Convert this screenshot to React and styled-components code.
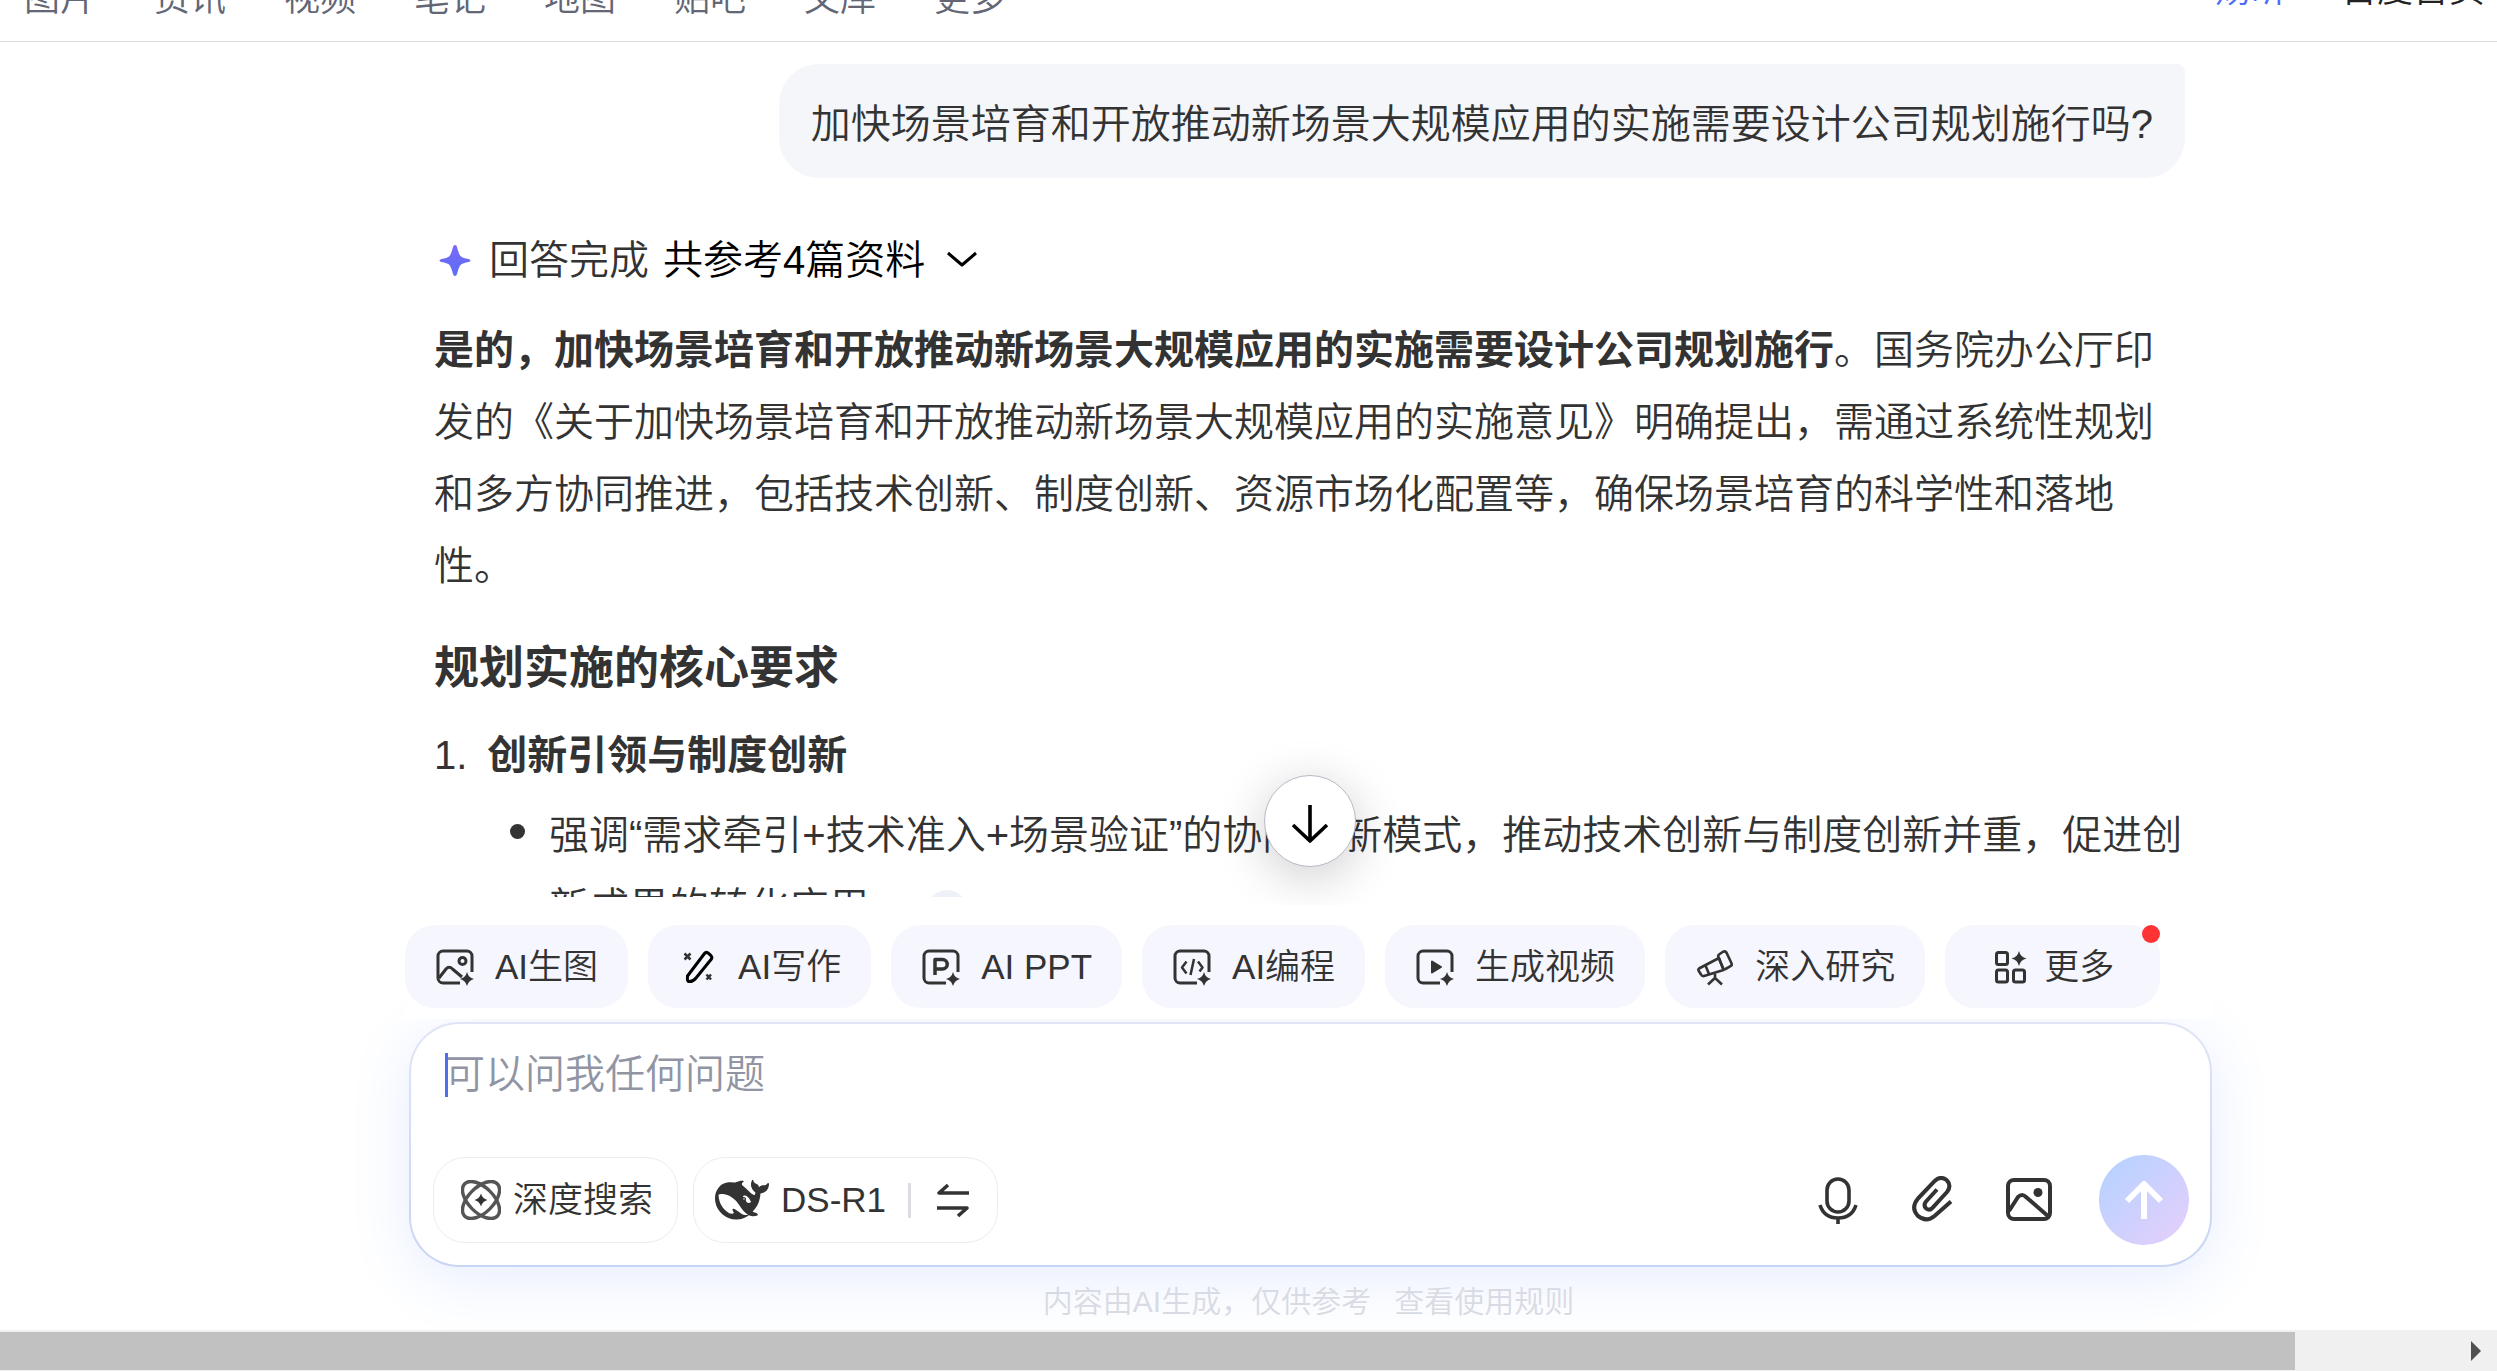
import React from 'react';
import styled, { createGlobalStyle } from 'styled-components';

const GlobalStyle = createGlobalStyle`
  * {
    box-sizing: border-box;
  }

  body {
    margin: 0;
    background: #fff;
    color: #333;
    font-family: "Liberation Sans", "Noto Sans CJK SC", sans-serif;
    font-size: 40px;
    font-weight: 350;
    line-height: 72px;
  }

  button, textarea {
    font: inherit;
    color: inherit;
  }

  button {
    padding: 0;
    border: none;
    background: none;
    cursor: pointer;
  }

  a {
    color: inherit;
    text-decoration: none;
  }

  strong {
    font-weight: 700;
  }

  svg {
    display: block;
    flex: none;
  }
`;

const Page = styled.div`
  display: flex;
  flex-direction: column;
  height: 100vh;
  overflow: hidden;
`;

const Header = styled.header`
  display: flex;
  flex: none;
  justify-content: space-between;
  align-items: flex-end;
  height: 42px;
  padding: 0 12px 0 24px;
  overflow: hidden;
  border-bottom: 1px solid #dcdcdf;
  font-size: 36px;
  line-height: 40px;
`;

const Tabs = styled.nav`
  display: flex;
  gap: 58px;
  padding-bottom: 22px;
  color: #626675;
`;

const UserLinks = styled.nav`
  display: flex;
  gap: 54px;
  padding-bottom: 31px;
  color: #222;
`;

const UserName = styled.a`
  color: #4e6ef2;
`;

const Stage = styled.main`
  position: relative;
  flex: 1;
  min-height: 0;
  padding-bottom: 8px;
  overflow: hidden;
`;

const Conversation = styled.div`
  display: flex;
  flex-direction: column;
  height: 100%;
  padding: 22px 312px 0 434px;
  overflow: hidden;
`;

const Question = styled.div`
  align-self: flex-end;
  flex: none;
  padding: 24px 32px 18px;
  border-radius: 40px 8px 40px 40px;
  background: #f5f6fa;
`;

const Status = styled.div`
  display: flex;
  flex: none;
  align-items: center;
  margin-top: 46px;
`;

const StatusText = styled.span`
  margin: 0 14px 0 15px;
`;

const SourcesButton = styled.button`
  display: flex;
  align-items: center;
  gap: 17px;
  color: #000;
`;

const Answer = styled.article`
  flex: none;
  margin-top: 18px;

  p {
    margin: 0;
  }

  h3 {
    margin: 31px 0 14px;
    font-size: 45px;
    font-weight: 700;
  }
`;

const Points = styled.ol`
  margin: 0;
  padding: 0;
  list-style: none;
`;

const PointTitle = styled.div`
  display: flex;
  gap: 20px;
`;

const Details = styled.ul`
  margin: 8px 0 0;
  padding: 0;
  list-style: none;
`;

const Detail = styled.li`
  display: flex;
  margin-right: -12px;
  padding-left: 76px;

  &::before {
    content: "";
    flex: none;
    width: 15px;
    height: 15px;
    margin: 25px 24px 0 0;
    border-radius: 50%;
    background: #333;
  }
`;

const Cite = styled.button`
  display: inline-flex;
  align-items: center;
  justify-content: center;
  width: 40px;
  height: 40px;
  margin-left: 18px;
  border-radius: 50%;
  background: #eff1f9;
  vertical-align: middle;
`;

const ScrollDown = styled.button`
  position: absolute;
  right: 0;
  bottom: 38px;
  left: 122px;
  display: flex;
  align-items: center;
  justify-content: center;
  width: 92px;
  height: 92px;
  margin: 0 auto;
  border: 1px solid #b7b9c6;
  border-radius: 50%;
  background: #fff;
  color: #000;
  box-shadow: 0 10px 50px rgba(0, 0, 0, 0.2);
`;

const Composer = styled.section`
  flex: none;
  padding: 0 285px 0 405px;
`;

const Tools = styled.div`
  position: relative;
  z-index: 1;
  display: flex;
  gap: 20px;
  margin-bottom: 3px;
  padding: 20px 0 11px;
  background: #fff;
`;

const Tool = styled.button`
  position: relative;
  display: flex;
  align-items: center;
  justify-content: center;
  gap: ${({ $wide }) => ($wide ? 13 : 20)}px;
  height: 83px;
  padding: 0 ${({ $wide }) => ($wide ? 46 : 30)}px;
  border-radius: 30px;
  background: #f6f6fe;
  font-size: 35px;
  white-space: nowrap;
`;

const Dot = styled.span`
  position: absolute;
  top: 0;
  right: 0;
  width: 18px;
  height: 18px;
  border-radius: 50%;
  background: #ff3333;
`;

const InputBox = styled.form`
  display: flex;
  flex-direction: column;
  justify-content: space-between;
  height: 245px;
  margin: 0 0 0 4px;
  padding: 14px 21px 20px 22px;
  border: 2px solid transparent;
  border-radius: 50px;
  background:
    linear-gradient(#fff, #fff) padding-box,
    linear-gradient(#e0e5f6, #c9d5f5) border-box;
  box-shadow: 0 12px 60px rgba(78, 130, 255, 0.14);
`;

const Field = styled.div`
  position: relative;
  padding-left: 12px;
`;

const TextArea = styled.textarea`
  display: block;
  width: 100%;
  height: 72px;
  padding: 0;
  border: none;
  outline: none;
  background: none;
  resize: none;
  overflow: hidden;

  &::placeholder {
    color: #9195a3;
    opacity: 1;
  }
`;

const Caret = styled.span`
  position: absolute;
  top: 15px;
  left: 12px;
  width: 3px;
  height: 44px;
  background: #4e6ef2;
`;

const Controls = styled.div`
  display: flex;
  align-items: center;
  justify-content: space-between;
  height: 90px;
`;

const Modes = styled.div`
  display: flex;
  gap: 15px;
`;

const Mode = styled.button`
  display: flex;
  align-items: center;
  gap: 12px;
  height: 86px;
  padding: 0 ${({ $end }) => $end}px 0 ${({ $start }) => $start}px;
  border: 1px solid #ececee;
  border-radius: 32px;
  font-size: 35px;
  white-space: nowrap;
`;

const Divider = styled.span`
  width: 3px;
  height: 35px;
  margin: 0 10px;
  background: #dcdde2;
`;

const Actions = styled.div`
  display: flex;
  align-items: center;
`;

const IconButton = styled.button`
  width: 48px;
  height: 48px;
  margin-right: 47px;
`;

const Send = styled.button`
  display: flex;
  align-items: center;
  justify-content: center;
  width: 90px;
  height: 90px;
  border-radius: 50%;
  background: linear-gradient(135deg, #b8d2ff 10%, #e2cffc 90%);
  color: #fff;
`;

const Notice = styled.footer`
  display: flex;
  justify-content: center;
  gap: 23px;
  height: 63px;
  padding: 6px 0 0;
  color: #d8dbe3;
  font-size: 30px;
  line-height: 57px;
`;

const ScrollTrack = styled.div`
  display: flex;
  flex: none;
  align-items: center;
  justify-content: space-between;
  height: 41px;
  padding: 2px 16px 1px 0;
  background: #f0f0f0;
`;

const ScrollThumb = styled.div`
  width: 92.5%;
  height: 100%;
  background: #c1c1c1;
`;

const Stroke = ({ size = 40, box = 40, width = 3, children }) => (
  <svg
    width={size}
    height={size}
    viewBox={`0 0 ${box} ${box}`}
    fill="none"
    stroke="currentColor"
    strokeWidth={width}
    strokeLinejoin="round"
    aria-hidden="true"
  >
    {children}
  </svg>
);

const Spark = ({ x = 32, y = 32, r = 7 }) => (
  <path
    d={`M${x} ${y - r}q1.4 ${r - 1.4} ${r} ${r}q${1.4 - r} 1.4 ${-r} ${r}q-1.4 ${1.4 - r} ${-r} ${-r}q${r - 1.4} -1.4 ${r} ${-r}z`}
    fill="currentColor"
    stroke="none"
  />
);

// rounded frame with its lower right corner left open for the spark
const Frame = () => <path d="M25 36H8a5 5 0 0 1-5-5V9a5 5 0 0 1 5-5h24a5 5 0 0 1 5 5v16" />;

const PaintIcon = () => (
  <Stroke>
    <Frame />
    <circle cx="27.500" cy="14" r="3.500" />
    <path d="M4 31l7-9q3-3.500 6.500 0L27 30" />
    <Spark />
  </Stroke>
);

const WriteIcon = () => (
  <Stroke>
    <g stroke="#000">
      <path d="M26.500 6.500q1.500-2 3.500-.6l3 2.800q1.600 1.600.2 3.600L18 31q-3 4-7.500 3.500-1.500-.4-1-5.500z" />
    </g>
    <path d="M6.500 6.500l6 6m0-6l-6 6M28.500 27.500l4.500 5m0-5l-4.500 5" strokeWidth="2.5" />
  </Stroke>
);

const PptIcon = () => (
  <Stroke>
    <Frame />
    <path d="M14 28V12.500h7.500a4.700 4.700 0 0 1 0 9.500H14" strokeWidth="3.500" />
    <Spark />
  </Stroke>
);

const CodeIcon = () => (
  <Stroke>
    <Frame />
    <path d="M14.500 14.500L10 20.500l4.500 6M26 14.500l4.500 6-3 4M22 12l-3.500 16" strokeWidth="2.500" />
    <Spark />
  </Stroke>
);

const VideoIcon = () => (
  <Stroke>
    <Frame />
    <path d="M17 14.500v11l9-5.500z" fill="currentColor" strokeWidth="2" />
    <Spark />
  </Stroke>
);

const TelescopeIcon = () => (
  <Stroke width={2.6}>
    <path d="M4 21.500l20-10.500 4.500 12L9 29q-2 .4-3-1.500l-2.500-4q-.6-1.300.5-2z" />
    <path d="M24 7.500l4-2.800q2.500-1 3.500 1l5 10.500q.8 2-1 3l-5 2.800q-1.700.6-2.500-1l-4.500-10.500q-.8-2 .5-3zM10.500 18.500l3.500 8.500M20 27v4l-7 6.500M20 31l7 6.500" />
  </Stroke>
);

const MoreIcon = () => (
  <Stroke>
    <rect x="5.500" y="5.500" width="11" height="12" rx="2" />
    <rect x="5.500" y="23" width="11" height="12" rx="2" />
    <rect x="22.500" y="23" width="11" height="12" rx="2" />
    <Spark x={28} y={11.5} r={7.5} />
  </Stroke>
);

const AtomIcon = () => (
  <Stroke width={3.4}>
    <g stroke="#555">
      <ellipse cx="20" cy="20" rx="23" ry="12.500" transform="rotate(45 20 20)" />
      <ellipse cx="20" cy="20" rx="23" ry="12.500" transform="rotate(-45 20 20)" />
    </g>
    <Spark x={20} y={20} r={6.5} />
  </Stroke>
);

const WhaleIcon = () => (
  <svg width="54" height="54" viewBox="0 0 24 24" fill="currentColor" aria-hidden="true">
    <path d="M23.748 4.482c-.254-.124-.364.113-.512.234-.051.039-.094.09-.137.136-.372.397-.806.657-1.373.626-.829-.046-1.537.214-2.163.848-.133-.782-.575-1.248-1.247-1.548-.352-.156-.708-.311-.955-.65-.172-.241-.219-.51-.305-.774-.055-.16-.11-.323-.293-.35-.2-.031-.278.136-.356.276-.313.572-.434 1.202-.422 1.84.027 1.436.633 2.58 1.838 3.393.137.093.172.187.129.323-.082.28-.18.552-.266.833-.055.179-.137.217-.329.14a5.526 5.526 0 01-1.736-1.18c-.857-.828-1.631-1.742-2.597-2.458a11.365 11.365 0 00-.689-.471c-.985-.957.13-1.743.388-1.836.27-.098.093-.432-.779-.428-.872.004-1.67.295-2.687.684a3.055 3.055 0 01-.465.137 9.597 9.597 0 00-2.883-.102c-1.885.21-3.39 1.102-4.497 2.623C.082 8.606-.231 10.684.152 12.85c.403 2.284 1.569 4.175 3.36 5.653 1.858 1.533 3.997 2.284 6.438 2.14 1.482-.085 3.133-.284 4.994-1.86.47.234.962.327 1.78.397.63.059 1.236-.03 1.705-.128.735-.156.684-.837.419-.961-2.155-1.004-1.682-.595-2.113-.926 1.096-1.296 2.746-2.642 3.392-7.003.05-.347.007-.565 0-.845-.004-.17.035-.237.23-.256a4.173 4.173 0 001.545-.475c1.396-.763 1.96-2.015 2.093-3.517.02-.23-.004-.467-.247-.588zM11.581 18c-2.089-1.642-3.102-2.183-3.52-2.16-.392.024-.321.471-.235.763.09.288.207.486.371.739.114.167.192.416-.113.603-.673.416-1.842-.14-1.897-.167-1.361-.802-2.5-1.86-3.301-3.307-.774-1.393-1.224-2.887-1.298-4.482-.02-.386.093-.522.477-.592a4.696 4.696 0 011.529-.039c2.132.312 3.946 1.265 5.468 2.774.868.86 1.525 1.887 2.202 2.891.72 1.066 1.494 2.082 2.48 2.914.348.292.625.514.891.677-.802.09-2.14.11-3.054-.614zm1-6.44a.306.306 0 01.415-.287.302.302 0 01.2.288.306.306 0 01-.31.307.303.303 0 01-.304-.308zm3.11 1.596c-.2.081-.399.151-.59.16a1.245 1.245 0 01-.798-.254c-.274-.23-.47-.358-.552-.758a1.73 1.73 0 01.016-.588c.07-.327-.008-.537-.239-.727-.187-.156-.426-.199-.688-.199a.559.559 0 01-.254-.078c-.11-.054-.2-.19-.114-.358.028-.054.16-.186.192-.21.356-.202.767-.136 1.146.016.352.144.618.408 1.001.782.391.451.462.576.685.914.176.265.336.537.445.848.067.195-.019.354-.25.452z" />
  </svg>
);

const SwapIcon = () => (
  <Stroke width={3.6}>
    <path d="M36 13H6l9-8M4 28h30l-9 8" />
  </Stroke>
);

const MicIcon = () => (
  <Stroke size={48} box={48} width={3.6}>
    <rect x="13" y="3" width="22" height="33" rx="11" />
    <path d="M6 29q4 13 18 13t18-13M24 42v7" />
  </Stroke>
);

const ClipIcon = () => (
  <Stroke size={48} box={48} width={4}>
    <path d="M28 13.500L17 25.500q-3 4 .2 7 3.300 2.600 6.300-.7L38 16q5-6.500-.4-12-6-4.500-11.600.7L9 22.500q-7.500 9-.5 17 8.500 7.500 17 .5L42 25.500" />
  </Stroke>
);

const PictureIcon = () => (
  <Stroke size={48} box={48} width={4}>
    <rect x="4" y="4" width="42" height="39" rx="6" />
    <path d="M5 35l9-14q4-4 8 0l23 20" />
    <circle cx="34" cy="16.500" r="4.500" fill="currentColor" stroke="none" />
  </Stroke>
);

const tabs = ['图片', '资讯', '视频', '笔记', '地图', '贴吧', '文库', '更多'];

const tools = [
  { label: 'AI生图', Icon: PaintIcon },
  { label: 'AI写作', Icon: WriteIcon },
  { label: 'AI PPT', Icon: PptIcon },
  { label: 'AI编程', Icon: CodeIcon },
  { label: '生成视频', Icon: VideoIcon },
  { label: '深入研究', Icon: TelescopeIcon },
  { label: '更多', Icon: MoreIcon, isMore: true },
];

const TopBar = () => (
  <Header>
    <Tabs>
      {tabs.map((tab) => (
        <a href="#" key={tab}>{tab}</a>
      ))}
    </Tabs>
    <UserLinks>
      <UserName href="#">炀昕</UserName>
      <a href="#">百度首页</a>
    </UserLinks>
  </Header>
);

const Chat = () => (
  <Stage>
    <Conversation>
      <Question>加快场景培育和开放推动新场景大规模应用的实施需要设计公司规划施行吗?</Question>
      <Status>
        <svg width="40" height="40" viewBox="0 0 40 40" aria-hidden="true">
          <defs>
            <linearGradient id="star" x1="0" y1="0" x2="0" y2="1">
              <stop offset="0" stopColor="#7a68f6" />
              <stop offset="1" stopColor="#5b6ef6" />
            </linearGradient>
          </defs>
          <path
            d="M21 5q1.500 0 2 2 2 8 4 9.500t7.500 2.500q2 .5 2 1.500t-2 1.500q-5.500 1-7.500 2.500t-4 9.500q-.5 2-2 2t-2-2q-2-8-4-9.500T7.500 22q-2-.5-2-1.500t2-1.500q5.500-1 7.500-2.500T19 7q.5-2 2-2z"
            fill="url(#star)"
          />
        </svg>
        <StatusText>回答完成</StatusText>
        <SourcesButton type="button">
          共参考4篇资料
          <Stroke>
            <path d="M6 13l14 12 14-12" />
          </Stroke>
        </SourcesButton>
      </Status>
      <Answer>
        <p>
          <strong>是的，加快场景培育和开放推动新场景大规模应用的实施需要设计公司规划施行</strong>
          。国务院办公厅印发的《关于加快场景培育和开放推动新场景大规模应用的实施意见》明确提出，需通过系统性规划和多方协同推进，包括技术创新、制度创新、资源市场化配置等，确保场景培育的科学性和落地性。
        </p>
        <h3>规划实施的核心要求</h3>
        <Points>
          <li>
            <PointTitle>
              <span>1.</span>
              <strong>创新引领与制度创新</strong>
            </PointTitle>
            <Details>
              <Detail>
                <div>
                  强调“需求牵引+技术准入+场景验证”的协同创新模式，推动技术创新与制度创新并重，促进创新成果的转化应用。
                  <Cite type="button" aria-label="来源">
                    <Stroke size={28} box={28}>
                      <path d="M14 1v27" />
                    </Stroke>
                  </Cite>
                </div>
              </Detail>
            </Details>
          </li>
        </Points>
      </Answer>
    </Conversation>
    <ScrollDown type="button" aria-label="滚动到底部">
      <Stroke size={44} box={44} width={3.6}>
        <path d="M22 6v36M5 26l17 16 17-16" />
      </Stroke>
    </ScrollDown>
  </Stage>
);

const App = () => (
  <Page>
    <GlobalStyle />
    <TopBar />
    <Chat />
    <Composer>
      <Tools>
        {tools.map(({ label, Icon, isMore }) => (
          <Tool type="button" key={label} $wide={isMore}>
            <Icon />
            {label}
            {isMore && <Dot />}
          </Tool>
        ))}
      </Tools>
      <InputBox>
        <Field>
          <TextArea aria-label="提问" placeholder="可以问我任何问题" />
          <Caret />
        </Field>
        <Controls>
          <Modes>
            <Mode type="button" $start={27} $end={24}>
              <AtomIcon />
              深度搜索
            </Mode>
            <Mode type="button" $start={21} $end={24}>
              <WhaleIcon />
              DS-R1
              <Divider />
              <SwapIcon />
            </Mode>
          </Modes>
          <Actions>
            <IconButton type="button" aria-label="语音"><MicIcon /></IconButton>
            <IconButton type="button" aria-label="附件"><ClipIcon /></IconButton>
            <IconButton type="button" aria-label="图片"><PictureIcon /></IconButton>
            <Send type="submit" aria-label="发送">
              <Stroke size={44} box={44} width={6}>
                <path d="M22 41V6M5 23L22 6l17 17" />
              </Stroke>
            </Send>
          </Actions>
        </Controls>
      </InputBox>
      <Notice>
        <span>内容由AI生成，仅供参考</span>
        <a href="#">查看使用规则</a>
      </Notice>
    </Composer>
    <ScrollTrack>
      <ScrollThumb />
      <svg width="10" height="20" viewBox="0 0 10 20" aria-hidden="true">
        <path d="M0 0l10 10L0 20z" fill="#505050" />
      </svg>
    </ScrollTrack>
  </Page>
);

export default App;
